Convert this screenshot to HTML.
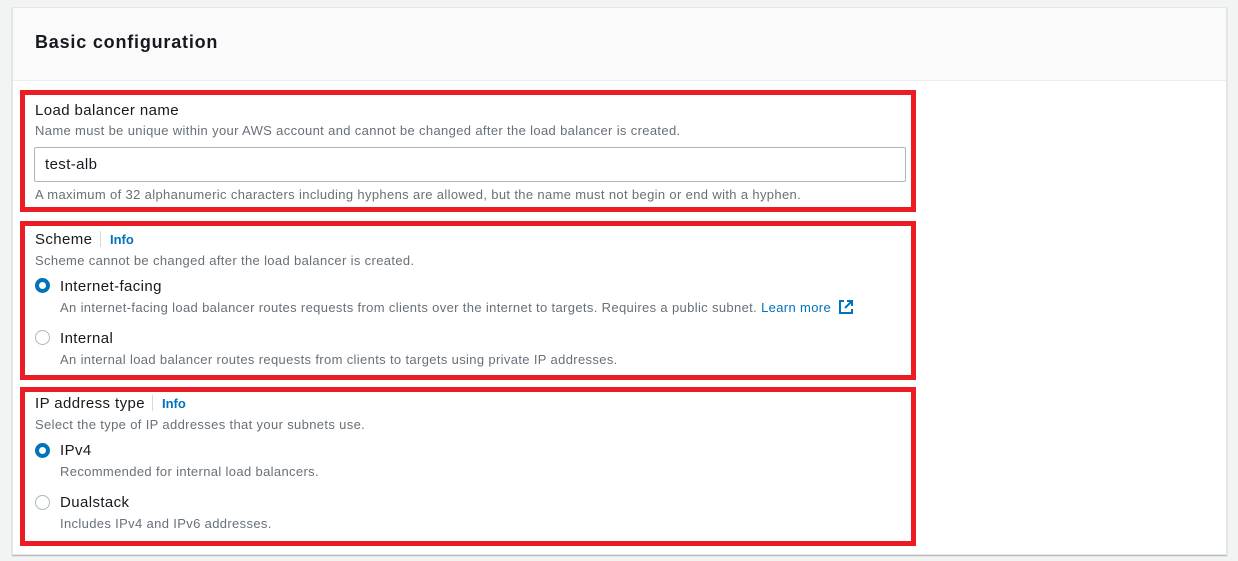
<!DOCTYPE html>
<html><head><style>
*{box-sizing:border-box;margin:0;padding:0}
body{width:1238px;height:561px;background:#f2f3f3;font-family:"Liberation Sans",sans-serif;position:relative;overflow:hidden;color:#16191f}
.card{position:absolute;left:12px;top:7px;width:1215px;height:548px;background:#fff;border:1px solid #e4e6e6;box-shadow:0 1px 1px rgba(0,22,22,.3)}
.hd{position:absolute;left:0;top:0;width:100%;height:73px;background:#fafafa;border-bottom:1px solid #eaeded}
.hd h2{position:absolute;left:22px;top:24px;font-size:18px;letter-spacing:0.8px;font-weight:bold;color:#16191f}
.box{position:absolute;border:5px solid #ec1c24}
.t{position:absolute;white-space:nowrap}
.lbl{font-size:15px;letter-spacing:0.4px;color:#16191f}
.d{font-size:13px;letter-spacing:0.35px;color:#687078}
.info{font-size:13px;font-weight:bold;color:#0073bb}
.sep{position:absolute;width:1px;height:16px;background:#d5dbdb}
.r{position:absolute;width:15px;height:15px;border-radius:50%;border:1.5px solid #aab7b8;background:#fff}
.r.on{border:4px solid #0073bb}
.input{position:absolute;left:34px;top:147px;width:872px;height:35px;border:1px solid #aab7b8;border-radius:2px;font-size:15px;letter-spacing:0.4px;padding:8px 10px}
</style></head><body>
<div class="card"><div class="hd"><h2>Basic configuration</h2></div></div>
<div class="box" style="left:20px;top:90px;width:896px;height:122px"></div>
<div class="box" style="left:20px;top:221px;width:896px;height:159px"></div>
<div class="box" style="left:20px;top:387px;width:896px;height:159px"></div>

<div class="t lbl" style="left:35px;top:102px">Load balancer name</div>
<div class="t d" style="left:35px;top:123px">Name must be unique within your AWS account and cannot be changed after the load balancer is created.</div>
<div class="input">test-alb</div>
<div class="t d" style="left:35px;top:187px">A maximum of 32 alphanumeric characters including hyphens are allowed, but the name must not begin or end with a hyphen.</div>

<div class="t lbl" style="left:35px;top:231px">Scheme</div>
<div class="sep" style="left:100px;top:231px"></div>
<div class="t info" style="left:110px;top:232px">Info</div>
<div class="t d" style="left:35px;top:253px">Scheme cannot be changed after the load balancer is created.</div>
<div class="r on" style="left:35px;top:278px"></div>
<div class="t lbl" style="left:60px;top:278px">Internet-facing</div>
<div class="t d" style="left:60px;top:300px">An internet-facing load balancer routes requests from clients over the internet to targets. Requires a public subnet. <span style="color:#0073bb">Learn more</span></div>
<svg style="position:absolute;left:838px;top:299px" width="16" height="16" viewBox="0 0 16 16" fill="none" stroke="#0073bb" stroke-width="2"><path d="M6 2H2v12h12v-4"/><path d="M9 2h5v5M14 2L7 9"/></svg>
<div class="r" style="left:35px;top:330px"></div>
<div class="t lbl" style="left:60px;top:330px">Internal</div>
<div class="t d" style="left:60px;top:352px">An internal load balancer routes requests from clients to targets using private IP addresses.</div>

<div class="t lbl" style="left:35px;top:395px">IP address type</div>
<div class="sep" style="left:152px;top:395px"></div>
<div class="t info" style="left:162px;top:396px">Info</div>
<div class="t d" style="left:35px;top:417px">Select the type of IP addresses that your subnets use.</div>
<div class="r on" style="left:35px;top:443px"></div>
<div class="t lbl" style="left:60px;top:442px">IPv4</div>
<div class="t d" style="left:60px;top:464px">Recommended for internal load balancers.</div>
<div class="r" style="left:35px;top:495px"></div>
<div class="t lbl" style="left:60px;top:494px">Dualstack</div>
<div class="t d" style="left:60px;top:516px">Includes IPv4 and IPv6 addresses.</div>
</body></html>
